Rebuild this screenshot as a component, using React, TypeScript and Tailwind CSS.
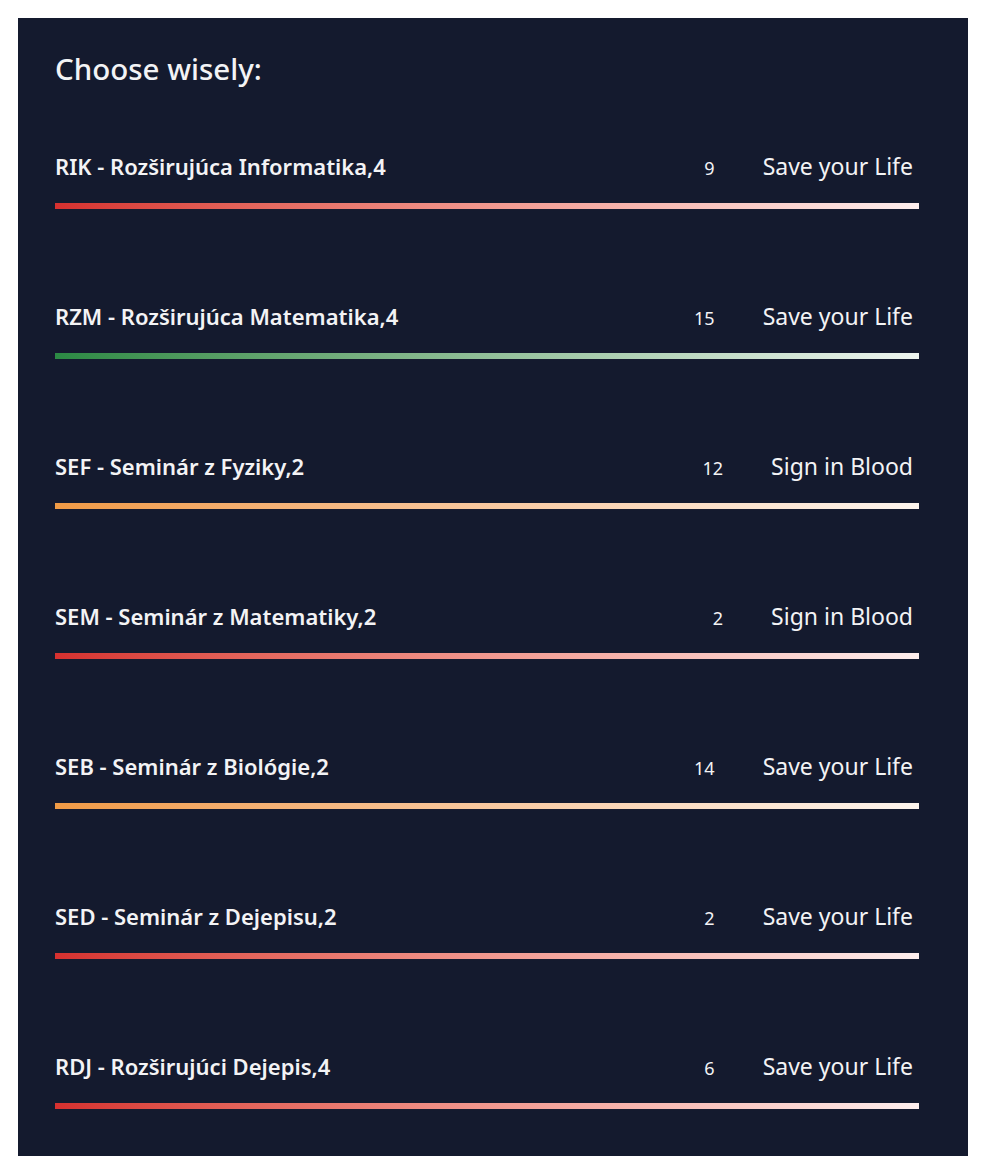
const subjects = [
  { name: "RIK - Rozširujúca Informatika,4", count: 9, action: "Save your Life", bar: "from-[#d6302f] to-[#fdeeed]" },
  { name: "RZM - Rozširujúca Matematika,4", count: 15, action: "Save your Life", bar: "from-[#2b8a44] to-[#eef5f0]" },
  { name: "SEF - Seminár z Fyziky,2", count: 12, action: "Sign in Blood", bar: "from-[#f09a45] to-[#fdf5ee]" },
  { name: "SEM - Seminár z Matematiky,2", count: 2, action: "Sign in Blood", bar: "from-[#d6302f] to-[#fdeeed]" },
  { name: "SEB - Seminár z Biológie,2", count: 14, action: "Save your Life", bar: "from-[#f09a45] to-[#fdf5ee]" },
  { name: "SED - Seminár z Dejepisu,2", count: 2, action: "Save your Life", bar: "from-[#d6302f] to-[#fdeeed]" },
  { name: "RDJ - Rozširujúci Dejepis,4", count: 6, action: "Save your Life", bar: "from-[#d6302f] to-[#fdeeed]" },
];

export default function App() {
  return (
    <div className="min-h-screen bg-white p-[18px] font-['Noto_Sans',sans-serif]">
      <div className="bg-[#141a2e] pl-[37px] pr-[49px] pt-[31px] pb-[47px] text-[#f3f3f5]">
        <h1 className="text-[29.5px] leading-[40px] font-medium">Choose wisely:</h1>
        <div className="mt-[60px]">
          {subjects.map((s, i) => (
            <div key={i} className={i < subjects.length - 1 ? "mb-[90px]" : ""}>
              <div className="flex items-baseline h-[28px]">
                <span className="flex-1 text-[22px] font-semibold">{s.name}</span>
                <span className="text-[18px]">{s.count}</span>
                <span className="ml-[48px] mr-[6px] text-[23px]">{s.action}</span>
              </div>
              <div className={`mt-[26px] h-[6px] bg-gradient-to-r ${s.bar}`} />
            </div>
          ))}
        </div>
      </div>
    </div>
  );
}
